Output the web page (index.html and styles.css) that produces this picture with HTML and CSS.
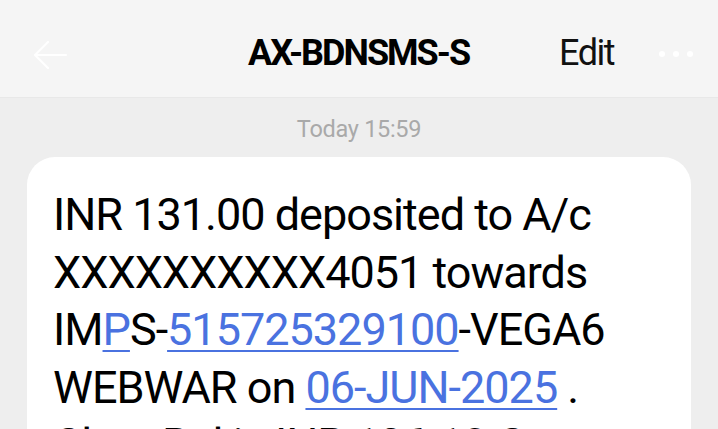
FILE: index.html
```html
<!DOCTYPE html>
<html>
<head>
<meta charset="utf-8">
<link rel="stylesheet" href="styles.css">
</head>
<body>
<div class="app">
  <header class="topbar">
    <svg class="back" width="36" height="32" viewBox="0 0 36 32"><path d="M34 16H3M16 3L3 16l13 13" fill="none" stroke="#ffffff" stroke-width="2.2" stroke-linecap="round" stroke-linejoin="round"/></svg>
    <div class="title">AX-BDNSMS-S</div>
    <div class="edit">Edit</div>
    <div class="more"><span></span><span></span><span></span></div>
  </header>
  <main class="thread">
    <div class="time">Today 15:59</div>
    <div class="bubble">
      <p class="msg">INR 131.00 deposited to A/c XXXXXXXXXX4051 towards IM<a class="lnk">P</a>S-<a class="lnk">515725329100</a>-VEGA6 WEBWAR on <a class="lnk">06-JUN-2025</a> . Clear Bal is INR 136.10 Cr.</p>
    </div>
  </main>
</div>
</body>
</html>
```
FILE: styles.css
```css
html, body {
  margin: 0;
  padding: 0;
  width: 718px;
  height: 429px;
  overflow: hidden;
  background: #eeeeee;
  font-family: Roboto, "Liberation Sans", sans-serif;
}
.app {
  display: flex;
  flex-direction: column;
  height: 429px;
}
.topbar {
  height: 97px;
  flex: none;
  background: #f5f5f5;
  border-bottom: 1px solid #e8e8e8;
  display: flex;
  align-items: center;
  position: relative;
}
.back {
  position: absolute;
  left: 32px;
  top: 39px;
}
.title {
  position: absolute;
  left: 248px;
  top: 32px;
  font-size: 36px;
  font-weight: 700;
  color: #000;
  letter-spacing: -2px;
}
.edit {
  position: absolute;
  left: 559px;
  top: 32px;
  font-size: 36px;
  color: #111;
  letter-spacing: -1.5px;
}
.more {
  position: absolute;
  left: 659px;
  top: 51px;
  display: flex;
  gap: 8px;
}
.more span {
  width: 6px;
  height: 6px;
  border-radius: 50%;
  background: #ffffff;
}
.thread {
  flex: 1;
  display: flex;
  flex-direction: column;
  align-items: center;
}
.time {
  margin-top: 17px;
  font-size: 23.5px;
  color: #a9a9a9;
  line-height: 28px;
  letter-spacing: -0.3px;
}
.bubble {
  margin-top: 14px;
  align-self: flex-start;
  margin-left: 27px;
  width: 664px;
  box-sizing: border-box;
  background: #ffffff;
  border-radius: 28px;
  padding: 29px 26px 20px 26px;
}
.msg {
  margin: 0;
  font-size: 45px;
  line-height: 57.5px;
  color: #000;
  letter-spacing: -1px;
}
.lnk {
  color: #4a72e0;
  text-decoration: underline;
  text-decoration-thickness: 2px;
  text-underline-offset: 5px;
}
```
